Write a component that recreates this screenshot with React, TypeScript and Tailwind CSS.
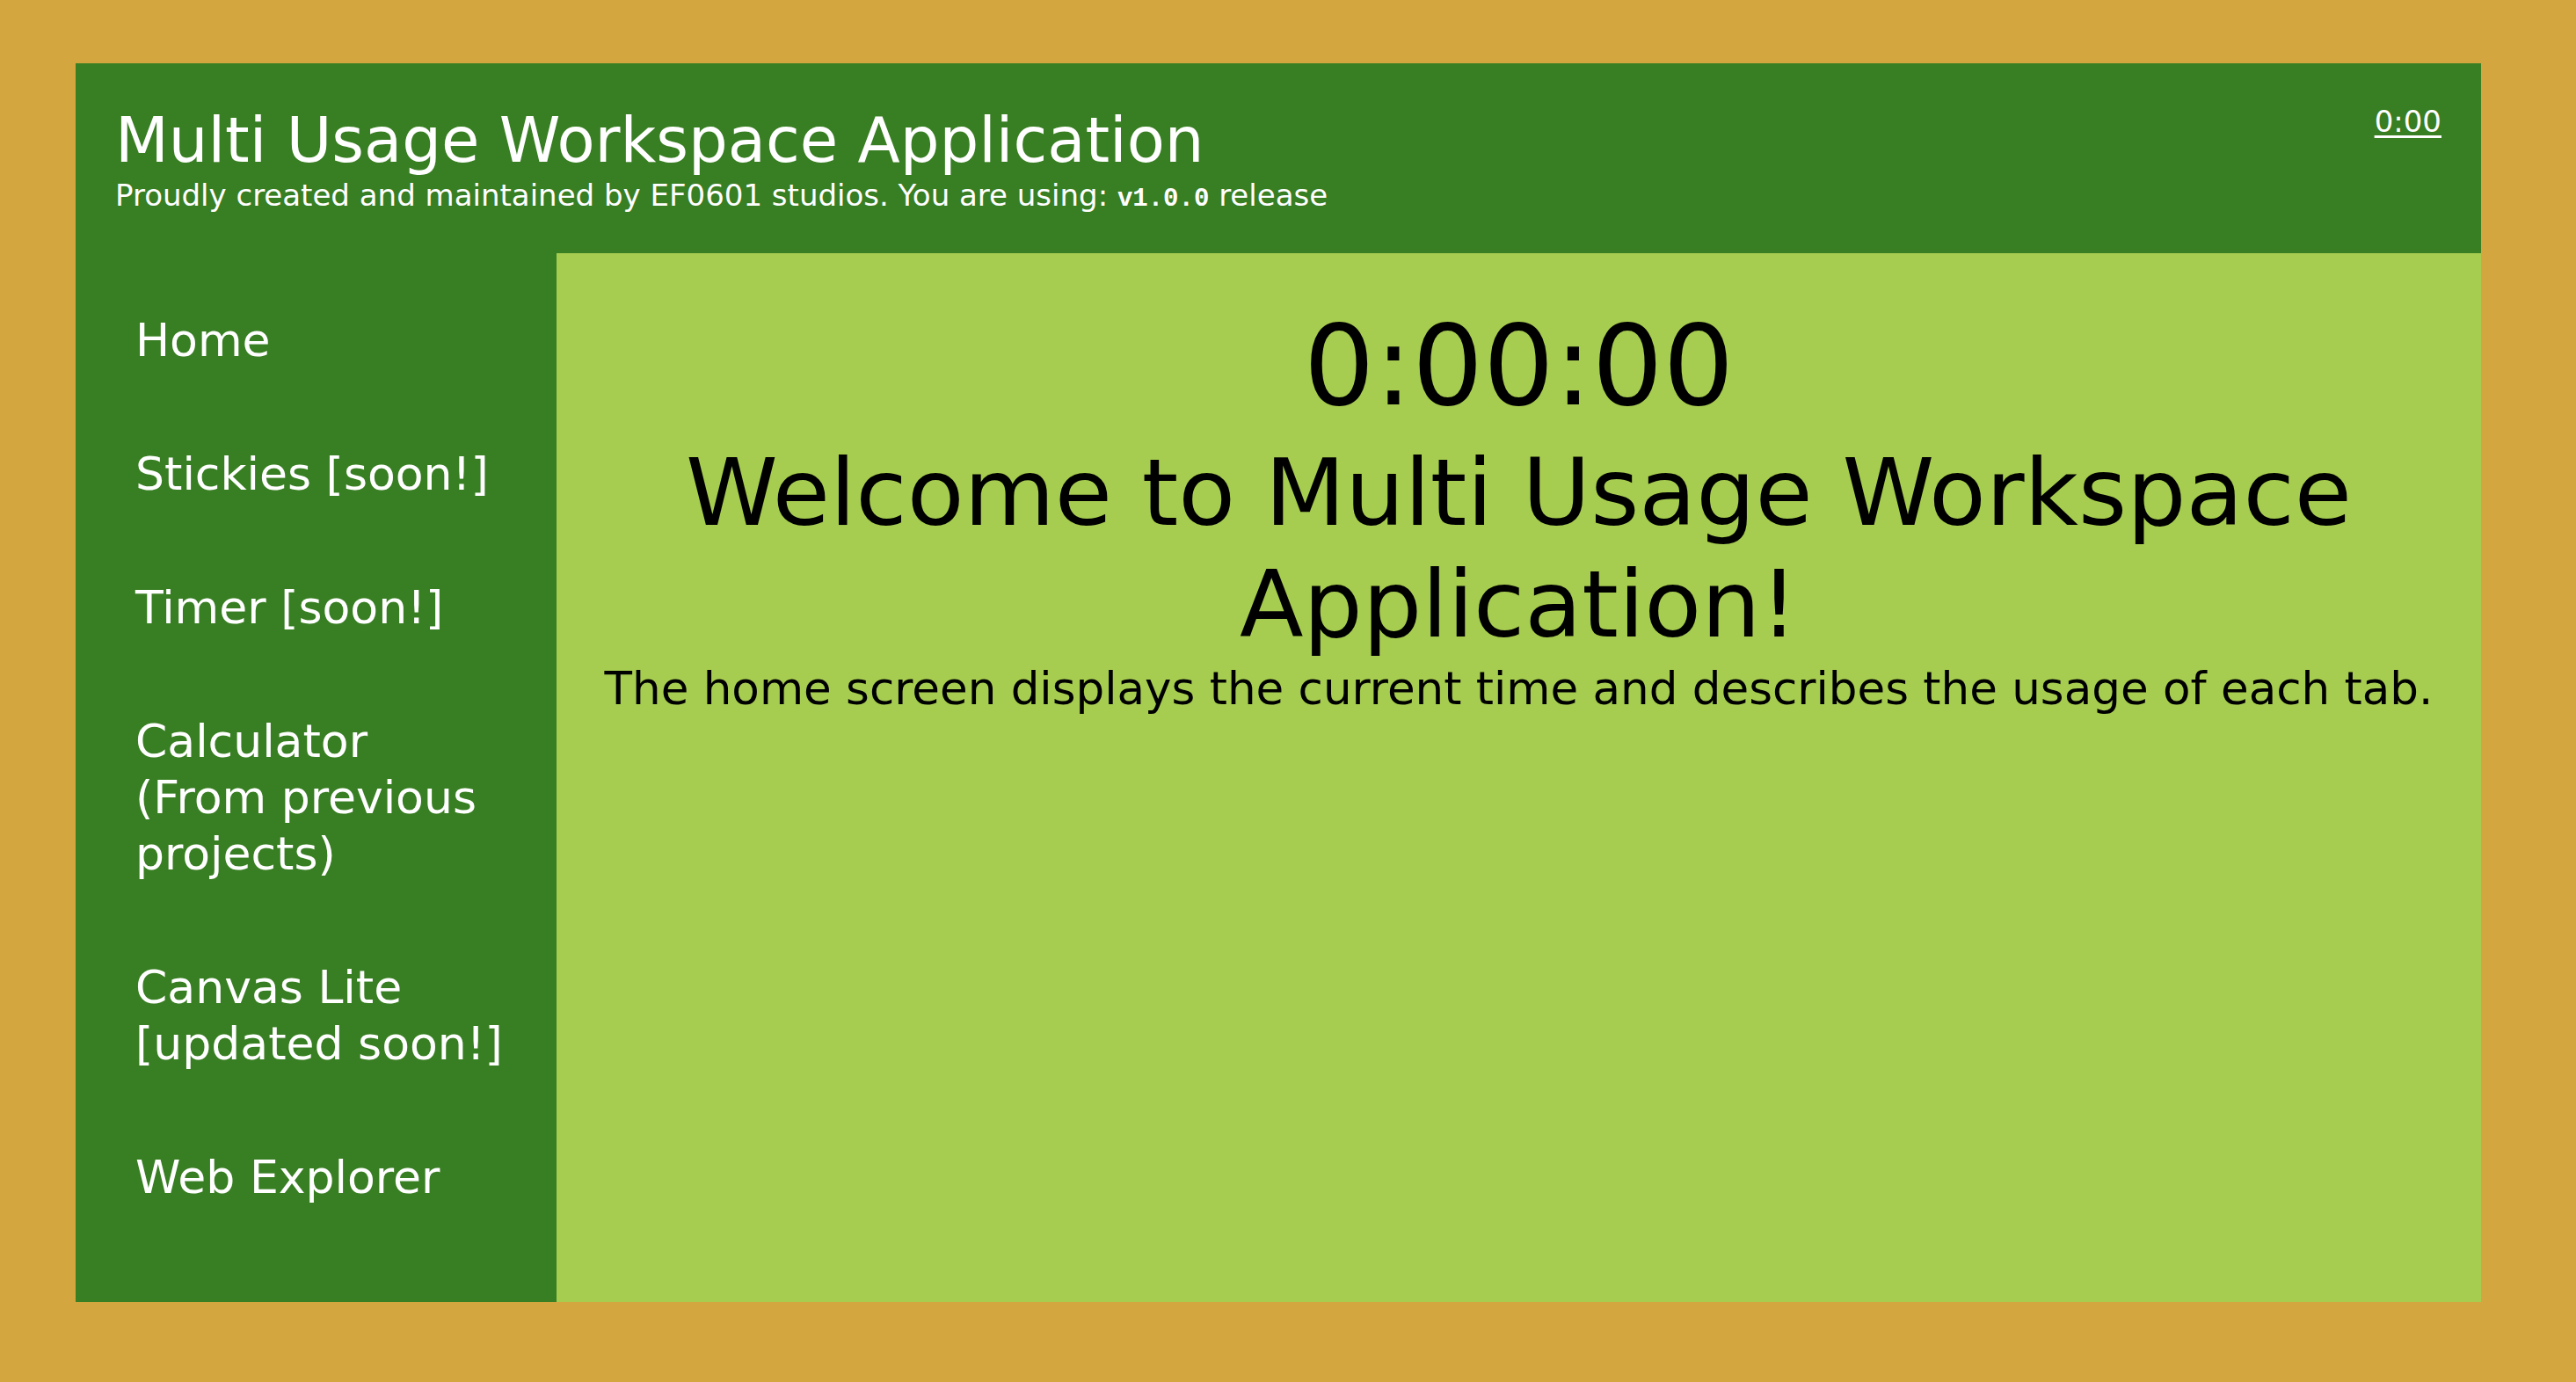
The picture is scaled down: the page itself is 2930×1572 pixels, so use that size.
import React from 'react';

const NAV_ITEMS = [
  'Home',
  'Stickies [soon!]',
  'Timer [soon!]',
  'Calculator (From previous projects)',
  'Canvas Lite [updated soon!]',
  'Web Explorer',
];

const FONT = { fontFamily: '"DejaVu Sans", "Noto Sans", sans-serif' };

function Header() {
  return (
    <header className="flex items-start justify-between bg-[#387e22] px-[45px] pt-[46px] pb-[41px] text-white">
      <div>
        <h1 className="text-[70.5px] leading-[84px] font-normal">Multi Usage Workspace Application</h1>
        <p className="text-[34px] leading-[40px]">
          Proudly created and maintained by EF0601 studios. You are using:{' '}
          <code className="text-[29px] font-bold" style={{ fontFamily: '"Liberation Mono", "DejaVu Sans Mono", monospace' }}>
            v1.0.0
          </code>{' '}
          release
        </p>
      </div>
      <a href="#" className="text-[34px] leading-[41px] underline underline-offset-[4px]">
        0:00
      </a>
    </header>
  );
}

function Sidebar() {
  return (
    <nav className="w-[547px] shrink-0 bg-[#387e22] pl-[68px] pt-[67px] text-white">
      <ul className="flex w-[422px] flex-col gap-[88px]">
        {NAV_ITEMS.map((item) => (
          <li key={item} className="text-[52px] leading-[64px]">
            {item}
          </li>
        ))}
      </ul>
    </nav>
  );
}

function HomeScreen() {
  return (
    <main className="flex flex-1 flex-col items-center bg-[#a6cc50] px-4 pt-[56px] text-center text-black">
      <p className="text-[127px] leading-[145px]">0:00:00</p>
      <h2 className="mt-[8px] text-[106px] leading-[127px] font-normal">
        Welcome to Multi Usage Workspace Application!
      </h2>
      <p className="mt-[2px] text-[51.5px] leading-[61px]">
        The home screen displays the current time and describes the usage of each tab.
      </p>
    </main>
  );
}

export default function App() {
  return (
    <div className="min-h-screen bg-[#d3a640] pl-[86px] pr-[108px] pt-[72px] pb-[91px]" style={FONT}>
      <div className="flex h-[1409px] flex-col">
        <Header />
        <div className="flex flex-1">
          <Sidebar />
          <HomeScreen />
        </div>
      </div>
    </div>
  );
}
